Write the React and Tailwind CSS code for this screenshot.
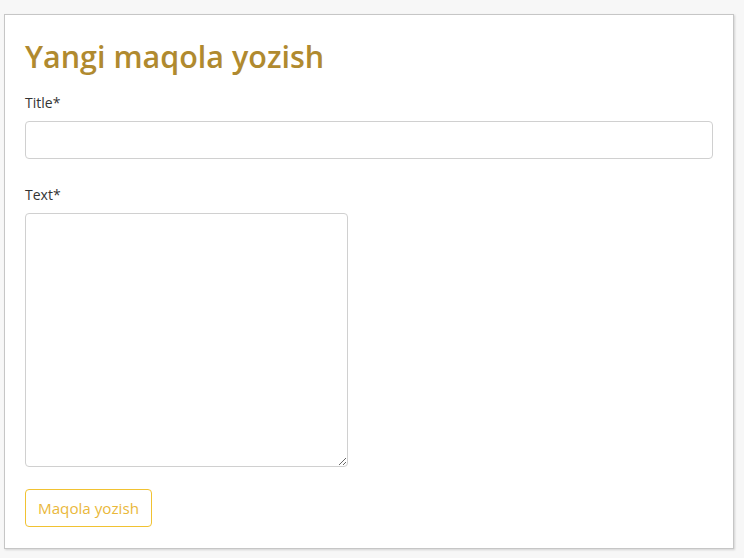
export default function App() {
  return (
    <div
      className="min-h-[558px] bg-[#f7f7f7] pl-1 pr-[10px] pt-[14px] pb-[10px]"
      style={{ fontFamily: '"Open Sans", "Noto Sans", sans-serif' }}
    >
      <div className="border border-[#c6c6c6] bg-white px-5 pt-[21px] pb-[21px] shadow-[1px_1px_2px_rgba(0,0,0,0.15)]">
        <h1 className="text-[30.5px] font-semibold leading-[40px] text-[#b08a2f]">
          Yangi maqola yozish
        </h1>

        <label className="mt-[17px] block text-[14px] leading-5 text-[#333]">Title*</label>
        <input
          type="text"
          className="mt-[8px] block h-[38px] w-full rounded-[4px] border border-[#d0d0d0] bg-white px-3 outline-none"
        />

        <label className="mt-[26px] block text-[14px] leading-5 text-[#333]">Text*</label>
        <textarea className="mt-[8px] block h-[254px] w-[323px] rounded-[4px] border border-[#d0d0d0] bg-white px-3 outline-none" />

        <button className="mt-[22px] h-[38px] rounded-[4px] border border-[#f1c232] bg-white px-[12px] text-[15.2px] text-[#eab83a]">
          Maqola yozish
        </button>
      </div>
    </div>
  );
}
